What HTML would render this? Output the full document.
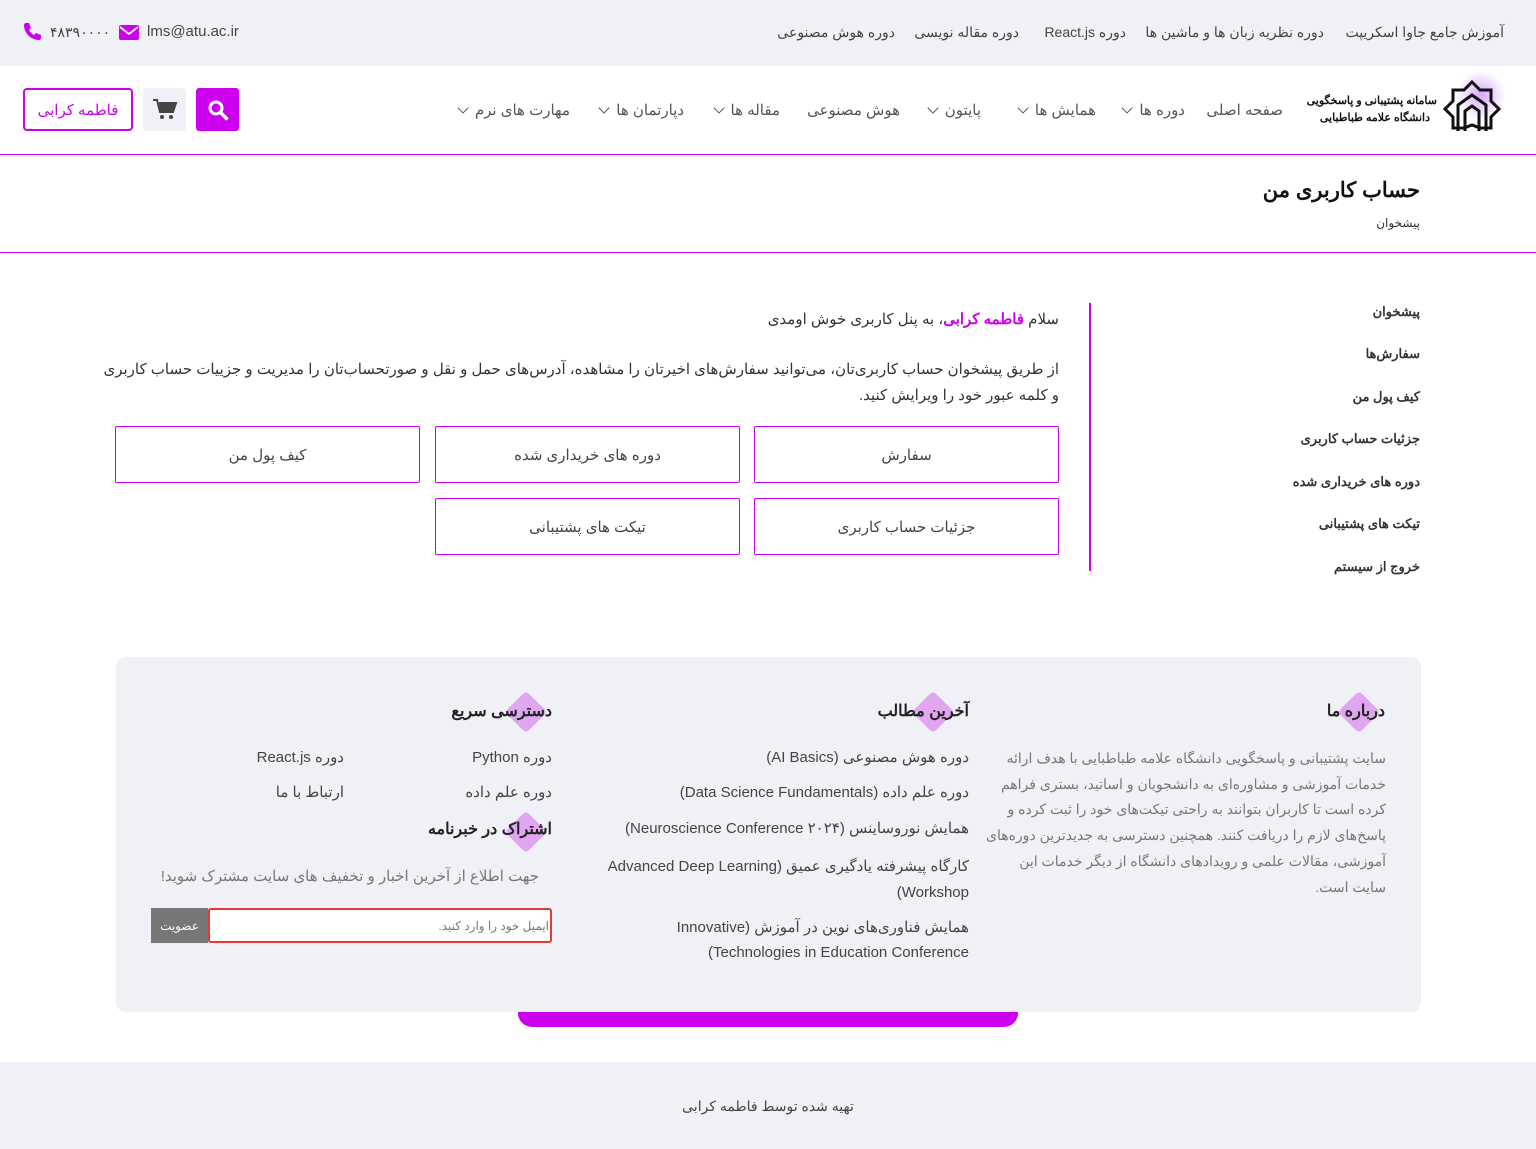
<!DOCTYPE html>
<html lang="fa" dir="rtl"><head><meta charset="utf-8">
<style>
*{margin:0;padding:0;box-sizing:border-box}
body{width:1536px;height:1149px;position:relative;background:#fff;font-family:"Liberation Sans","Noto Sans CJK SC",sans-serif;color:#333;overflow:hidden}
.a{position:absolute;white-space:nowrap}
.top{position:absolute;left:0;top:0;width:1536px;height:66px;background:#f0f1f6}
.hl{position:absolute;left:0;width:1536px;height:1px;background:#cc00ee}
.nav{font-size:15px;color:#555}
.chev{display:inline-block;width:8px;height:8px;border-right:1.6px solid #555;border-bottom:1.6px solid #555;transform:rotate(45deg);margin:0 8px 3px 0}
.side{font-size:13px;font-weight:bold;color:#333;right:116px}
.btn{position:absolute;width:305px;height:57px;border:1px solid #cc00ee;border-radius:2px;display:flex;align-items:center;justify-content:center;font-size:15px;color:#444}
.foot{position:absolute;left:116px;top:657px;width:1305px;height:355px;background:#f0f1f6;border-radius:10px}
.h{font-size:16px;font-weight:bold;color:#222}
.dia{position:absolute;width:30px;height:30px;background:#e0a6f0;transform:rotate(45deg);border-radius:4px}
.fl{font-size:15px;color:#444}
.gr{font-size:14px;color:#777}
</style></head><body>
<div class="top"></div>
<div class="a nav" style="right:32px;top:24px;font-size:14px;color:#444">آموزش جامع جاوا اسکریپت</div>
<div class="a nav" style="right:212px;top:24px;font-size:14px;color:#444">دوره نظریه زبان ها و ماشین ها</div>
<div class="a nav" style="right:410px;top:24px;font-size:14px;color:#444">دوره React.js</div>
<div class="a nav" style="right:517px;top:24px;font-size:14px;color:#444">دوره مقاله نویسی</div>
<div class="a nav" style="right:641px;top:24px;font-size:14px;color:#444">دوره هوش مصنوعی</div>
<svg class="a" style="left:22px;top:22px" width="20" height="20" viewBox="0 0 20 20"><path d="M4 1l3 0 2 5-2 2c1 2 3 4 5 5l2-2 5 2v3c0 1-1 2-2 2C9 18 2 11 2 3c0-1 1-2 2-2z" fill="#cc00ee"/></svg>
<div class="a" style="left:50px;top:24px;font-size:14px;color:#444">۴۸۳۹۰۰۰۰</div>
<svg class="a" style="left:119px;top:25px" width="20" height="15" viewBox="0 0 20 15"><rect width="20" height="15" rx="2" fill="#cc00ee"/><path d="M1 2l9 7 9-7" stroke="#fff" stroke-width="1.8" fill="none"/></svg>
<div class="a" dir="ltr" style="left:147px;top:23px;font-size:15px;color:#444">lms@atu.ac.ir</div>

<!-- header -->
<div class="a" style="left:1456px;top:70px;width:50px;height:50px;border-radius:50%;background:radial-gradient(#d9a8f7,rgba(255,255,255,0) 70%)"></div>
<svg class="a" style="left:1442px;top:79px" width="60" height="56" viewBox="0 0 60 56"><g fill="none" stroke="#111" stroke-width="3"><path d="M30 3l8 8h11v11l8 8-8 8v11H38l-8-3-8 3H11V38l-8-8 8-8V11h11z"/><path d="M16 52V26l14-10 14 10v26M23 52V32l7-5 7 5v20"/></g></svg>
<div class="a" style="right:99px;top:94px;font-size:11px;font-weight:bold;color:#111">سامانه پشتیبانی و پاسخگویی</div>
<div class="a" style="right:106px;top:111px;font-size:11px;font-weight:bold;color:#111">دانشگاه علامه طباطبایی</div>
<div class="a nav" style="right:253px;top:101px">صفحه اصلی</div>
<div class="a nav" style="right:351px;top:101px">دوره ها<span class="chev"></span></div>
<div class="a nav" style="right:440px;top:101px">همایش ها<span class="chev"></span></div>
<div class="a nav" style="right:555px;top:101px">پایتون<span class="chev"></span></div>
<div class="a nav" style="right:636px;top:101px">هوش مصنوعی</div>
<div class="a nav" style="right:756px;top:101px">مقاله ها<span class="chev"></span></div>
<div class="a nav" style="right:852px;top:101px">دپارتمان ها<span class="chev"></span></div>
<div class="a nav" style="right:966px;top:101px">مهارت های نرم<span class="chev"></span></div>
<div class="a" style="left:196px;top:88px;width:43px;height:43px;background:#cc00ee;border-radius:3px"></div>
<svg class="a" style="left:206px;top:98px" width="24" height="24" viewBox="0 0 24 24"><circle cx="10" cy="10" r="6" stroke="#fff" stroke-width="3" fill="none"/><path d="M14.5 14.5l6 6" stroke="#fff" stroke-width="3.5" stroke-linecap="round"/></svg>
<div class="a" style="left:143px;top:88px;width:43px;height:43px;background:#f0f1f6;border-radius:4px"></div>
<svg class="a" style="left:152px;top:98px" width="26" height="24" viewBox="0 0 26 24"><path d="M1 2h4l3 12h13l3-9H7" fill="none" stroke="#444" stroke-width="2"/><path d="M7 5h17l-3 9H8z" fill="#444"/><circle cx="10" cy="19" r="2" fill="#444"/><circle cx="19" cy="19" r="2" fill="#444"/></svg>
<div class="a" style="left:23px;top:88px;width:110px;height:43px;border:2px solid #cc00ee;border-radius:4px;color:#cc00ee;font-size:15px;display:flex;align-items:center;justify-content:center">فاطمه کرابی</div>
<div class="hl" style="top:154px"></div>

<div class="a" style="right:116px;top:178px;font-size:21px;font-weight:bold;color:#111">حساب کاربری من</div>
<div class="a" style="right:116px;top:216px;font-size:12px;color:#333">پیشخوان</div>
<div class="hl" style="top:252px"></div>

<!-- sidebar -->
<div class="a side" style="top:304px">پیشخوان</div>
<div class="a side" style="top:346px">سفارش‌ها</div>
<div class="a side" style="top:389px">کیف پول من</div>
<div class="a side" style="top:431px">جزئیات حساب کاربری</div>
<div class="a side" style="top:474px">دوره های خریداری شده</div>
<div class="a side" style="top:516px">تیکت های پشتیبانی</div>
<div class="a side" style="top:559px">خروج از سیستم</div>
<div class="a" style="left:1089px;top:303px;width:2px;height:268px;background:#cc00ee"></div>

<div class="a" style="right:477px;top:310px;font-size:15px;color:#333">سلام <b style="color:#cc00ee">فاطمه کرابی</b>، به پنل کاربری خوش اومدی</div>
<div class="a" style="right:477px;top:357px;width:960px;white-space:normal;font-size:15px;line-height:26px;color:#333;letter-spacing:-0.2px">از طریق پیشخوان حساب کاربری‌تان، می‌توانید سفارش‌های اخیرتان را مشاهده، آدرس‌های حمل و نقل و صورتحساب‌تان را مدیریت و جزییات حساب کاربری و کلمه عبور خود را ویرایش کنید.</div>
<div class="btn" style="left:754px;top:426px">سفارش</div>
<div class="btn" style="left:435px;top:426px">دوره های خریداری شده</div>
<div class="btn" style="left:115px;top:426px">کیف پول من</div>
<div class="btn" style="left:754px;top:498px">جزئیات حساب کاربری</div>
<div class="btn" style="left:435px;top:498px">تیکت های پشتیبانی</div>

<!-- footer -->
<div class="a" style="left:518px;top:1000px;width:500px;height:27px;background:#cc00ee;border-radius:0 0 14px 14px"></div>
<div class="foot"></div>
<div class="dia" style="left:1344px;top:697px"></div>
<div class="a h" style="right:151px;top:701px">درباره ما</div>
<div class="a" style="right:150px;top:746px;width:400px;white-space:normal;font-size:14px;line-height:25.7px;color:#777;letter-spacing:-0.3px">سایت پشتیبانی و پاسخگویی دانشگاه علامه طباطبایی با هدف ارائه خدمات آموزشی و مشاوره‌ای به دانشجویان و اساتید، بستری فراهم کرده است تا کاربران بتوانند به راحتی تیکت‌های خود را ثبت کرده و پاسخ‌های لازم را دریافت کنند. همچنین دسترسی به جدیدترین دوره‌های آموزشی، مقالات علمی و رویدادهای دانشگاه از دیگر خدمات این سایت است.</div>

<div class="dia" style="left:918px;top:697px"></div>
<div class="a h" style="right:567px;top:701px">آخرین مطالب</div>
<div class="a fl" style="right:567px;top:748px">دوره هوش مصنوعی (AI Basics)</div>
<div class="a fl" style="right:567px;top:783px">دوره علم داده (Data Science Fundamentals)</div>
<div class="a fl" style="right:567px;top:819px">همایش نوروساینس (Neuroscience Conference ۲۰۲۴)</div>
<div class="a fl" style="right:567px;top:854px;width:400px;white-space:normal;line-height:26px">کارگاه پیشرفته یادگیری عمیق (Advanced Deep Learning Workshop)</div>
<div class="a fl" style="right:567px;top:915px;width:320px;white-space:normal;line-height:25px">همایش فناوری‌های نوین در آموزش (Innovative Technologies in Education Conference)</div>

<div class="dia" style="left:511px;top:697px"></div>
<div class="a h" style="right:984px;top:701px">دسترسی سریع</div>
<div class="a fl" style="right:984px;top:748px">دوره Python</div>
<div class="a fl" style="right:1192px;top:748px">دوره React.js</div>
<div class="a fl" style="right:984px;top:783px">دوره علم داده</div>
<div class="a fl" style="right:1192px;top:783px">ارتباط با ما</div>
<div class="dia" style="left:511px;top:817px"></div>
<div class="a h" style="right:984px;top:819px">اشتراک در خبرنامه</div>
<div class="a gr" style="right:997px;top:867px;font-size:15px">جهت اطلاع از آخرین اخبار و تخفیف های سایت مشترک شوید!</div>
<div class="a" style="left:208px;top:908px;width:344px;height:35px;border:2px solid #e53935;border-radius:3px;background:#fff"></div>
<div class="a" style="right:987px;top:919px;font-size:12px;color:#777">ایمیل خود را وارد کنید.</div>
<div class="a" style="left:151px;top:908px;width:57px;height:35px;background:#777;color:#fff;font-size:12px;display:flex;align-items:center;justify-content:center">عضویت</div>

<div class="a" style="left:0;top:1062px;width:1536px;height:87px;background:#f0f1f6"></div>
<div class="a" style="left:0;width:1536px;top:1098px;text-align:center;font-size:14px;color:#444">تهیه شده توسط فاطمه کرابی</div>
</body></html>
